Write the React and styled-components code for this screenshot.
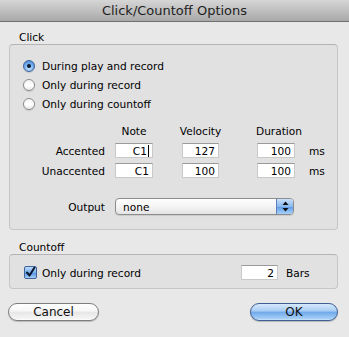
import React from "react";
import styled, { createGlobalStyle } from "styled-components";

const GlobalStyle = createGlobalStyle`
  html, body {
    margin: 0;
    padding: 0;
    background: #e8e8e8;
  }
  * {
    box-sizing: border-box;
  }
`;

const Window = styled.div`
  width: 349px;
  height: 337px;
  background: #e8e8e8;
  font-family: "DejaVu Sans", "Liberation Sans", sans-serif;
  font-size: 10.6px;
  color: #000;
  overflow: hidden;
`;

const TitleBar = styled.div`
  height: 22px;
  display: flex;
  align-items: center;
  justify-content: center;
  background: linear-gradient(#d6d6d6, #a9a9a9);
  border-bottom: 1px solid #6f6f6f;
  font-size: 13px;
  color: #1e1e1e;
  padding-bottom: 1px;
`;

const Content = styled.div`
  padding: 0 11px 0 9px;
`;

const SectionLabel = styled.div`
  height: 14px;
  line-height: 14px;
  margin-top: ${(p) => p.$top}px;
  padding-left: 10px;
`;

const GroupBox = styled.div`
  background: #e1e1e1;
  border: 1px solid #c6c6c6;
  border-top-color: #b4b4b4;
  border-radius: 4px;
  padding: ${(p) => p.$pad};
`;

const RadioList = styled.div`
  display: flex;
  flex-direction: column;
  padding-left: 13px;
`;

const OptionRow = styled.label`
  display: flex;
  align-items: center;
  gap: 7px;
  height: 19px;
`;

const Radio = styled.span`
  width: 12px;
  height: 12px;
  border-radius: 50%;
  border: 1px solid ${(p) => (p.$on ? "#41639a" : "#8b8b8b")};
  background: ${(p) =>
    p.$on
      ? "radial-gradient(circle at 50% 75%, #bfe0ff, #6aa7ea 60%, #3d7bd0)"
      : "linear-gradient(#f3f3f3, #ffffff 55%, #e9e9e9)"};
  box-shadow: 0 1px 1px rgba(0, 0, 0, 0.12);
  display: flex;
  align-items: center;
  justify-content: center;
  &::after {
    content: "";
    width: 4px;
    height: 4px;
    border-radius: 50%;
    background: #0d1a2e;
    display: ${(p) => (p.$on ? "block" : "none")};
  }
`;

const NoteGrid = styled.div`
  display: grid;
  grid-template-columns: 105px 67px 75px 45px auto;
  grid-template-rows: 14px 15px 15px;
  row-gap: 5px;
  margin-top: 11px;
  align-items: center;
`;

const Head = styled.div`
  width: ${(p) => p.$w}px;
  white-space: nowrap;
  display: flex;
  justify-content: center;
`;

const RowLabel = styled.div`
  text-align: right;
  padding-right: 10px;
`;

const Field = styled.div`
  width: ${(p) => p.$w}px;
  height: 15px;
  background: #fff;
  border: 1px solid #c9c9c9;
  border-top-color: #9a9a9a;
  padding-right: 3px;
  display: flex;
  align-items: center;
  justify-content: flex-end;
`;

const Caret = styled.span`
  width: 1px;
  height: 12px;
  background: #000;
  margin-left: 1px;
`;

const Unit = styled.div`
  padding-left: ${(p) => p.$gap || 7}px;
  width: ${(p) => (p.$w ? `${p.$w}px` : "auto")};
`;

const OutputRow = styled.div`
  display: grid;
  grid-template-columns: 105px auto;
  align-items: center;
  margin-top: 20px;
`;

const Select = styled.div`
  width: 179px;
  height: 17px;
  border: 1px solid #8d8d8d;
  border-radius: 4px;
  background: linear-gradient(#ffffff, #f4f4f4 50%, #e4e4e4);
  display: flex;
  align-items: center;
  overflow: hidden;
  box-shadow: 0 1px 1px rgba(0, 0, 0, 0.1);
`;

const SelectText = styled.div`
  flex: 1;
  padding-left: 7px;
`;

const SelectArrows = styled.div`
  width: 17px;
  height: 100%;
  border-left: 1px solid #5d80b8;
  background: linear-gradient(#c9e0fa, #8ab9ee 50%, #5d9be6 51%, #a8d0f8);
  display: flex;
  align-items: center;
  justify-content: center;
`;

const CountoffRow = styled.div`
  display: flex;
  align-items: center;
  height: 15px;
  padding-left: 14px;
`;

const Check = styled.span`
  width: 13px;
  height: 13px;
  border: 1px solid #41639a;
  border-radius: 2px;
  background: linear-gradient(#bcdcfd, #78b0ee 50%, #4f8fe0 51%, #a6cff9);
  display: flex;
  align-items: center;
  justify-content: center;
  margin-right: 5px;
`;

const Spacer = styled.div`
  flex: 1;
`;

const ButtonRow = styled.div`
  display: flex;
  justify-content: space-between;
  margin-top: 14px;
  margin-left: -1px;
`;

const Button = styled.div`
  width: ${(p) => p.$w}px;
  height: 18px;
  border-radius: 9px;
  border: 1px solid ${(p) => (p.$primary ? "#3f5f94" : "#7d7d7d")};
  background: ${(p) =>
    p.$primary
      ? "linear-gradient(#d7e9fb, #a6ccf3 45%, #6ea8ea 50%, #a3cdf6 90%, #cfe6fd)"
      : "linear-gradient(#ffffff, #f6f6f6 45%, #e6e6e6 50%, #f4f4f4 90%, #ffffff)"};
  box-shadow: 0 1px 1px rgba(0, 0, 0, 0.2);
  display: flex;
  align-items: center;
  justify-content: center;
  font-size: 12px;
  color: #111;
`;

const App = () => {
  return (
    <Window>
      <GlobalStyle />
      <TitleBar>Click/Countoff Options</TitleBar>
      <Content>
        <SectionLabel $top={8}>Click</SectionLabel>
        <GroupBox $pad="11px 0 14px 0">
          <RadioList>
            <OptionRow>
              <Radio $on />
              During play and record
            </OptionRow>
            <OptionRow>
              <Radio />
              Only during record
            </OptionRow>
            <OptionRow>
              <Radio />
              Only during countoff
            </OptionRow>
          </RadioList>
          <NoteGrid>
            <div />
            <Head $w={38}>Note</Head>
            <Head $w={37}>Velocity</Head>
            <Head $w={44}>Duration</Head>
            <div />

            <RowLabel>Accented</RowLabel>
            <Field $w={38}>
              C1
              <Caret />
            </Field>
            <Field $w={37}>127</Field>
            <Field $w={38}>100</Field>
            <Unit>ms</Unit>

            <RowLabel>Unaccented</RowLabel>
            <Field $w={38}>C1</Field>
            <Field $w={37}>100</Field>
            <Field $w={38}>100</Field>
            <Unit>ms</Unit>
          </NoteGrid>
          <OutputRow>
            <RowLabel>Output</RowLabel>
            <Select>
              <SelectText>none</SelectText>
              <SelectArrows>
                <svg width="7" height="11" viewBox="0 0 7 11">
                  <path d="M3.5 0.5 L6.5 4 H0.5 Z" fill="#111" />
                  <path d="M3.5 10.5 L6.5 7 H0.5 Z" fill="#111" />
                </svg>
              </SelectArrows>
            </Select>
          </OutputRow>
        </GroupBox>
        <SectionLabel $top={10}>Countoff</SectionLabel>
        <GroupBox $pad="10px 0 8px 0">
          <CountoffRow>
            <Check>
              <svg width="11" height="11" viewBox="0 0 11 11">
                <path
                  d="M2 5.5 L4.5 8.5 L9.5 0.5"
                  stroke="#0c1830"
                  strokeWidth="2"
                  fill="none"
                  strokeLinecap="round"
                  strokeLinejoin="round"
                />
              </svg>
            </Check>
            Only during record
            <Spacer />
            <Field $w={37}>2</Field>
            <Unit $gap={8} $w={59}>
              Bars
            </Unit>
          </CountoffRow>
        </GroupBox>
        <ButtonRow>
          <Button $w={91}>Cancel</Button>
          <Button $w={88} $primary>
            OK
          </Button>
        </ButtonRow>
      </Content>
    </Window>
  );
};

export default App;
